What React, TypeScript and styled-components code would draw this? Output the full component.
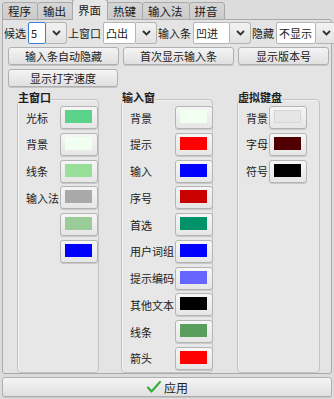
import styled, { createGlobalStyle } from "styled-components";

const GlobalStyle = createGlobalStyle`
  body {
    margin: 0;
    background: #dcdcdc;
    font-family: "Noto Sans CJK SC", "DejaVu Sans", sans-serif;
    font-size: 11px;
    color: #202020;
  }
`;

const mainColors = [
  { label: "光标", color: "#5bd38a" },
  { label: "背景", color: "#f0fff0" },
  { label: "线条", color: "#98e09a" },
  { label: "输入法", color: "#a9a9a9" },
  { label: "", color: "#99cc99" },
  { label: "", color: "#0000ff" },
];

const inputColors = [
  { label: "背景", color: "#f0fff0" },
  { label: "提示", color: "#ff0000" },
  { label: "输入", color: "#0000ff" },
  { label: "序号", color: "#c80000" },
  { label: "首选", color: "#00936a" },
  { label: "用户词组", color: "#0000ff" },
  { label: "提示编码", color: "#6666ff" },
  { label: "其他文本", color: "#000000" },
  { label: "线条", color: "#5a9e5e" },
  { label: "箭头", color: "#ff0000" },
];

const keyboardColors = [
  { label: "背景", color: "#e6e6e6" },
  { label: "字母", color: "#500000" },
  { label: "符号", color: "#000000" },
];

const tabs = ["程序", "输出", "界面", "热键", "输入法", "拼音"];

const Chevron = () => (
  <svg width="9" height="6" viewBox="0 0 9 6">
    <polyline points="1,1 4.5,4.5 8,1" fill="none" stroke="#303030" strokeWidth="1.8" />
  </svg>
);

const Check = () => (
  <svg width="16" height="14" viewBox="0 0 16 14">
    <path d="M2 7.5 L5.5 11.5 L14 2" fill="none" stroke="#3cae3c" strokeWidth="2.2" strokeLinecap="round" strokeLinejoin="round" />
  </svg>
);

const Combo = ({ value, width, focused }: { value: string; width: number; focused?: boolean }) => (
  <ComboBox>
    <ComboEdit $width={width} $focused={focused}>
      {value}
    </ComboEdit>
    <ComboButton>
      <Chevron />
    </ComboButton>
  </ComboBox>
);

const ColorGroup = ({ title, items, width, padRight }: { title: string; items: { label: string; color: string }[]; width: number; padRight: number }) => (
  <Group $width={width}>
    <GroupTitle>{title}</GroupTitle>
    <GroupFrame $padRight={padRight}>
      {items.map((item, index) => (
        <FormRow key={index}>
          <FormLabel>{item.label}</FormLabel>
          <Swatch>
            <SwatchFill $color={item.color} $light={item.color === "#e6e6e6"} />
          </Swatch>
        </FormRow>
      ))}
    </GroupFrame>
  </Group>
);

export default function App() {
  return (
    <Window>
      <GlobalStyle />
      <TabBar>
        {tabs.map((tab) => (
          <Tab key={tab} $active={tab === "界面"}>
            {tab}
          </Tab>
        ))}
      </TabBar>
      <Pane>
        <OptionRow>
          <Label>候选</Label>
          <Combo value="5" width={18} focused />
          <Label>上窗口</Label>
          <Combo value="凸出" width={33} />
          <Label>输入条</Label>
          <Combo value="凹进" width={37} />
          <Label>隐藏</Label>
          <Combo value="不显示" width={40} />
        </OptionRow>
        <ButtonRow>
          <PushButton $width={111}>输入条自动隐藏</PushButton>
          <PushButton $width={111}>首次显示输入条</PushButton>
          <PushButton $width={91}>显示版本号</PushButton>
        </ButtonRow>
        <ButtonRow>
          <PushButton $width={110}>显示打字速度</PushButton>
        </ButtonRow>
        <Groups>
          <ColorGroup title="主窗口" items={mainColors} width={82} padRight={2} />
          <ColorGroup title="输入窗" items={inputColors} width={92} padRight={1} />
          <ColorGroup title="虚拟键盘" items={keyboardColors} width={83} padRight={14} />
        </Groups>
      </Pane>
      <ApplyButton>
        <Check />
        <span>应用</span>
      </ApplyButton>
    </Window>
  );
}

const Window = styled.div`
  width: 334px;
  height: 399px;
  box-sizing: border-box;
  padding: 0 2px;
  display: flex;
  flex-direction: column;
  background: #dcdcdc;
`;

const TabBar = styled.div`
  display: flex;
  align-items: flex-end;
  height: 20px;
  position: relative;
  z-index: 1;
  margin-bottom: -1px;
`;

const Tab = styled.div<{ $active?: boolean }>`
  box-sizing: border-box;
  height: ${(p) => (p.$active ? "21px" : "18px")};
  padding: 0 6px 0 5px;
  display: flex;
  align-items: center;
  font-size: 11.5px;
  border: 1px solid #a9a9a9;
  border-bottom: ${(p) => (p.$active ? "none" : "1px solid #a9a9a9")};
  border-radius: 3px 3px 0 0;
  margin-right: -1px;
  background: ${(p) => (p.$active ? "#e6e6e6" : "linear-gradient(#d6d6d6, #cbcbcb)")};
  color: #1a1a1a;
`;

const Pane = styled.div`
  box-sizing: border-box;
  height: 355px;
  border: 1px solid #a9a9a9;
  border-radius: 0 3px 3px 3px;
  background: #e4e4e4;
  padding: 2px 1px 0 1px;
  display: flex;
  flex-direction: column;
`;

const OptionRow = styled.div`
  display: flex;
  align-items: center;
  height: 22px;
  gap: 1px;
`;

const Label = styled.span`
  font-size: 11px;
  margin-right: 1px;
  white-space: nowrap;
`;

const ComboBox = styled.div`
  display: flex;
  height: 22px;
`;

const ComboEdit = styled.div<{ $width: number; $focused?: boolean }>`
  box-sizing: border-box;
  width: ${(p) => p.$width}px;
  height: 22px;
  background: #ffffff;
  border: 1px solid ${(p) => (p.$focused ? "#3d7fd6" : "#b4b4b4")};
  border-radius: 2px;
  padding: 0 2px;
  display: flex;
  align-items: center;
  font-size: 11px;
`;

const ComboButton = styled.div`
  box-sizing: border-box;
  width: 21px;
  height: 22px;
  border: 1px solid #b4b4b4;
  border-left: none;
  border-radius: 0 3px 3px 0;
  background: linear-gradient(#f2f2f2, #e2e2e2);
  display: flex;
  align-items: center;
  justify-content: center;
`;

const ButtonRow = styled.div`
  display: flex;
  gap: 4px;
  padding-left: 4px;
  margin-top: 3px;
  & + & {
    margin-top: 4px;
  }
`;

const PushButton = styled.div<{ $width: number }>`
  box-sizing: border-box;
  width: ${(p) => p.$width}px;
  height: 18px;
  border: 1px solid #b0b0b0;
  border-radius: 3px;
  background: linear-gradient(#f4f4f4, #e0e0e0);
  box-shadow: 0 1px 0 #c4c4c4;
  display: flex;
  align-items: center;
  justify-content: center;
  font-size: 11px;
`;

const Groups = styled.div`
  display: flex;
  gap: 22px;
  padding-left: 13px;
  margin-top: 4px;
  & > :nth-child(3) {
    margin-left: 2px;
  }
`;

const Group = styled.div<{ $width: number }>`
  width: ${(p) => p.$width}px;
  display: flex;
  flex-direction: column;
`;

const GroupTitle = styled.div`
  font-size: 11px;
  font-weight: bold;
  line-height: 12px;
  padding-left: 1px;
  align-self: flex-start;
  position: relative;
  z-index: 1;
  background: #e4e4e4;
`;

const GroupFrame = styled.div<{ $padRight: number }>`
  box-sizing: border-box;
  height: 274px;
  margin-top: -4px;
  border: 1px solid #c4c4c4;
  border-radius: 4px;
  background: #e7e7e7;
  box-shadow: inset 1px 1px 0 #f2f2f2;
  padding: 6px ${(p) => p.$padRight}px 0 8px;
  display: grid;
  grid-template-columns: auto 38px;
  justify-content: ${(p) => (p.$padRight > 5 ? "start" : "space-between")};
  align-content: start;
  column-gap: 1px;
  row-gap: 3.75px;
`;

const FormRow = styled.div`
  display: contents;
`;

const FormLabel = styled.span`
  font-size: 11px;
  display: flex;
  align-items: center;
  white-space: nowrap;
  height: 23px;
`;

const Swatch = styled.div`
  box-sizing: border-box;
  width: 38px;
  height: 23px;
  border: 1px solid #b4b4b4;
  border-radius: 3px;
  background: linear-gradient(#f6f6f6, #e6e6e6);
  box-shadow: 0 1px 0 #c8c8c8;
  padding: 3px 5px 5px 4px;
`;

const SwatchFill = styled.div<{ $color: string; $light?: boolean }>`
  width: 100%;
  height: 100%;
  background: ${(p) => p.$color};
  border: ${(p) => (p.$light ? "1px solid #d6d6d6" : "none")};
  box-sizing: border-box;
`;

const ApplyButton = styled.div`
  box-sizing: border-box;
  height: 20px;
  margin-top: 3px;
  border: 1px solid #b0b0b0;
  border-radius: 3px;
  background: linear-gradient(#f4f4f4, #e0e0e0);
  box-shadow: 0 1px 0 #c4c4c4;
  display: flex;
  align-items: center;
  justify-content: center;
  gap: 2px;
  font-size: 12px;
`;
